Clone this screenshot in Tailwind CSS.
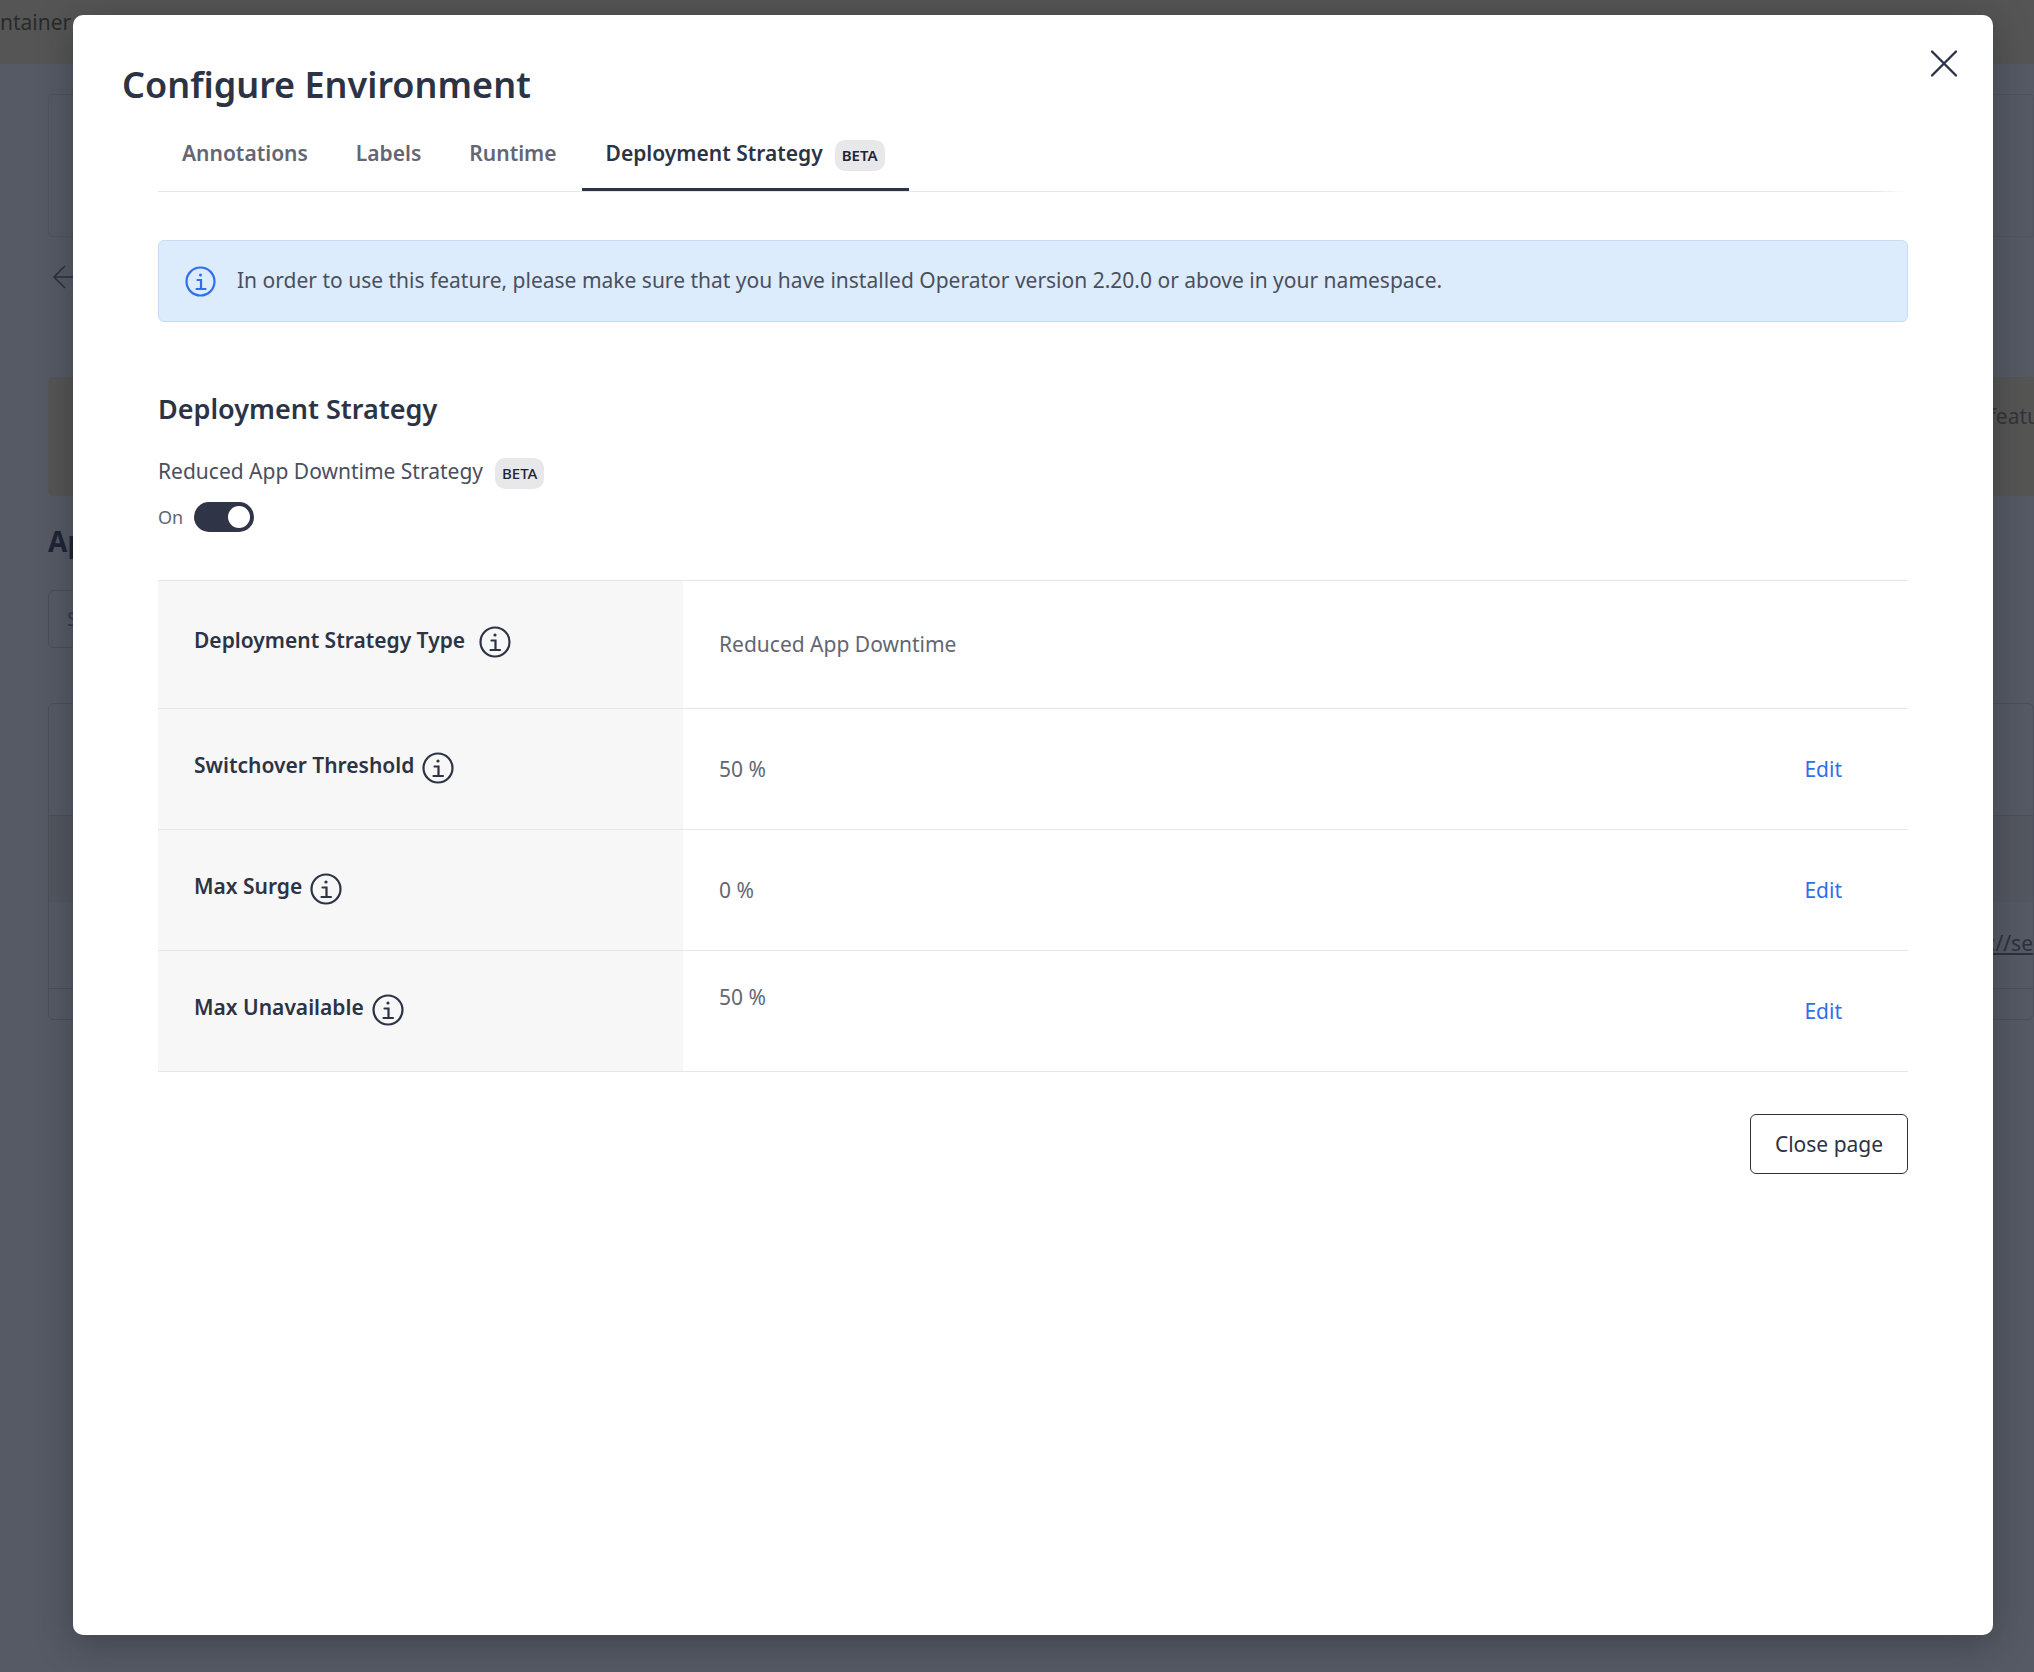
<!DOCTYPE html>
<html lang="en">
<head>
  <meta charset="UTF-8" />
  <title>Configure Environment</title>
  <script src="https://cdn.jsdelivr.net/npm/@tailwindcss/browser@4"></script>
</head>
<body class="relative w-[2034px] h-[1672px] overflow-hidden bg-[#555a64] font-['Noto_Sans',sans-serif] text-[#2c3345]">
  <!-- Page behind the dialog, dimmed -->
  <div class="h-[64px] bg-[#555555] text-[21px] leading-[44px] text-[#2a2a2a]">ntainer</div>
  <div class="px-[48px]">
    <div class="mt-[30px] h-[143px] border border-[#4e535d] rounded-[4px] -mr-[48px]"></div>
    <svg class="mt-[27px] ml-[4px]" width="26" height="26" viewBox="0 0 26 26" fill="none" stroke="#2b3040" stroke-width="1.6"><path d="M26 13H2M13 2 2 13l11 11"/></svg>
    <div class="mt-[87px] h-[119px] rounded-[6px] bg-[#555554] text-right text-[21px] leading-[78px] text-[#33343a] -mr-[54px]">featu</div>
    <div class="mt-[27px] h-[36px] text-[28px] font-bold leading-[36px] text-[#1e2436]">Ap</div>
    <div class="mt-[31px] h-[58px] border border-[#494e5a] rounded-[6px] pl-[18px] text-[20px] leading-[56px] text-[#333845]">S</div>
    <div class="mt-[55px] h-[317px] border border-[#4b505b] rounded-[6px] -mr-[48px]">
      <div class="h-[112px] border-b border-[#4b505b]"></div>
      <div class="h-[86px] bg-[#535760]"></div>
      <div class="h-[87px] border-b border-[#4b505b] text-right text-[21px] leading-[82px] text-[#2c3140] underline">://se</div>
    </div>
  </div>

  <!-- Dialog -->
  <div class="absolute left-[73px] top-[15px] w-[1920px] h-[1620px] bg-white rounded-[10px] shadow-[0_8px_36px_rgba(20,22,30,0.35)]">
    <button class="absolute right-[36px] top-[35px] text-[#2c3345]">
      <svg width="26" height="27" viewBox="0 0 26 27" fill="none" stroke="currentColor" stroke-width="2.4" stroke-linecap="round" class="block"><path d="M1 1.5 25 25.5M25 1.5 1 25.5"/></svg>
    </button>

    <h1 class="pl-[49px] pt-[45px] text-[36px] leading-[50px] font-semibold text-[#2c3345]">Configure Environment</h1>

    <div class="px-[85px]">
      <!-- Tabs -->
      <div class="flex h-[82px] pt-[29px] bg-[linear-gradient(to_right,#e6e6e8_98%,transparent)] bg-[length:100%_1px] bg-bottom bg-no-repeat text-[21px] font-semibold text-[#636673]">
        <div class="px-[24px] leading-[28px]">Annotations</div>
        <div class="px-[24px] leading-[28px]">Labels</div>
        <div class="px-[24px] leading-[28px]">Runtime</div>
        <div class="ml-[1px] px-[24px] flex items-start gap-[12px] h-[52px] border-b-[3px] border-[#2c3345] text-[#2c3345] leading-[28px]">
          <span>Deployment Strategy</span>
          <span class="h-[31px] mt-[1px] pb-[2px] px-[7px] flex items-center rounded-[10px] bg-[#e8e8ea] text-[15px] font-semibold text-[#1e2436]">BETA</span>
        </div>
      </div>

      <!-- Notice -->
      <div class="mt-[48px] h-[82px] flex items-center gap-[21px] pl-[26px] bg-[#dcecfc] border border-[#c5def5] rounded-[6px] text-[21px] text-[#4b4f5c]">
        <svg width="31" height="31" viewBox="0 0 31 31" fill="none" stroke="#2f6fed" stroke-width="2.2"><circle cx="15.5" cy="15.5" r="14"/><path d="M12.5 14h3.5v9M11.5 23h9" stroke-linecap="round"/><circle cx="15.5" cy="9" r="1.5" fill="#2f6fed" stroke="none"/></svg>
        <span>In order to use this feature, please make sure that you have installed Operator version 2.20.0 or above in your namespace.</span>
      </div>

      <h2 class="mt-[69px] text-[27px] leading-[36px] font-semibold text-[#2c3345]">Deployment Strategy</h2>

      <div class="mt-[29px] flex items-center gap-[12px] h-[32px]">
        <span class="text-[21px] text-[#4b4f5c]">Reduced App Downtime Strategy</span>
        <span class="h-[31px] mt-[3px] px-[7px] flex items-center rounded-[10px] bg-[#e8e8ea] text-[15px] font-medium text-[#1e2436]">BETA</span>
      </div>

      <div class="mt-[14px] flex items-center gap-[11px]">
        <span class="text-[18px] text-[#636673]">On</span>
        <span class="w-[60px] h-[30px] rounded-full bg-[#2f3547] flex items-center justify-end pr-[4px]">
          <span class="w-[22px] h-[22px] rounded-full bg-white"></span>
        </span>
      </div>

      <!-- Settings table -->
      <div class="mt-[48px] border-t border-[#e6e6e8] text-[21px]">
        <div class="grid grid-cols-[525px_1fr] h-[128px] border-b border-[#e6e6e8]">
          <div class="bg-[#f7f7f7] pl-[36px] pt-[45px] flex items-start gap-[14px] font-semibold leading-[28px]">
            <span>Deployment Strategy Type</span>
            <svg width="32" height="32" viewBox="0 0 32 32" fill="none" stroke="#2c3345" stroke-width="2.2"><circle cx="16" cy="16" r="14.5"/><path d="M12.5 14.5H16.5V24M11.5 24H21" stroke-linecap="round"/><circle cx="16" cy="9" r="1.6" fill="#2c3345" stroke="none"/></svg>
          </div>
          <div class="pl-[36px] pt-[49px] leading-[28px] text-[#636673]">Reduced App Downtime</div>
        </div>
        <div class="grid grid-cols-[525px_1fr] h-[121px] border-b border-[#e6e6e8]">
          <div class="bg-[#f7f7f7] pl-[36px] pt-[42px] flex items-start gap-[8px] font-semibold leading-[28px]">
            <span>Switchover Threshold</span>
            <svg class="mt-[1px]" width="32" height="32" viewBox="0 0 32 32" fill="none" stroke="#2c3345" stroke-width="2.2"><circle cx="16" cy="16" r="14.5"/><path d="M12.5 14.5H16.5V24M11.5 24H21" stroke-linecap="round"/><circle cx="16" cy="9" r="1.6" fill="#2c3345" stroke="none"/></svg>
          </div>
          <div class="pl-[36px] pr-[66px] pt-[46px] flex justify-between leading-[28px] text-[#636673]"><span>50 %</span><a class="text-[#2f6fed]">Edit</a></div>
        </div>
        <div class="grid grid-cols-[525px_1fr] h-[121px] border-b border-[#e6e6e8]">
          <div class="bg-[#f7f7f7] pl-[36px] pt-[42px] flex items-start gap-[8px] font-semibold leading-[28px]">
            <span>Max Surge</span>
            <svg class="mt-[1px]" width="32" height="32" viewBox="0 0 32 32" fill="none" stroke="#2c3345" stroke-width="2.2"><circle cx="16" cy="16" r="14.5"/><path d="M12.5 14.5H16.5V24M11.5 24H21" stroke-linecap="round"/><circle cx="16" cy="9" r="1.6" fill="#2c3345" stroke="none"/></svg>
          </div>
          <div class="pl-[36px] pr-[66px] pt-[46px] flex justify-between leading-[28px] text-[#636673]"><span>0 %</span><a class="text-[#2f6fed]">Edit</a></div>
        </div>
        <div class="grid grid-cols-[525px_1fr] h-[121px] border-b border-[#e6e6e8]">
          <div class="bg-[#f7f7f7] pl-[36px] pt-[42px] flex items-start gap-[8px] font-semibold leading-[28px]">
            <span>Max Unavailable</span>
            <svg class="mt-[1px]" width="32" height="32" viewBox="0 0 32 32" fill="none" stroke="#2c3345" stroke-width="2.2"><circle cx="16" cy="16" r="14.5"/><path d="M12.5 14.5H16.5V24M11.5 24H21" stroke-linecap="round"/><circle cx="16" cy="9" r="1.6" fill="#2c3345" stroke="none"/></svg>
          </div>
          <div class="pl-[36px] pr-[66px] pt-[32px] flex justify-between leading-[28px] text-[#636673]"><span>50 %</span><a class="mt-[14px] text-[#2f6fed]">Edit</a></div>
        </div>
      </div>

      <div class="mt-[42px] flex justify-end">
        <button class="w-[158px] h-[60px] pt-[2px] border-[1.5px] border-[#2c3345] rounded-[6px] text-[21px] text-[#2c3345]">Close page</button>
      </div>
    </div>
  </div>
</body>
</html>
